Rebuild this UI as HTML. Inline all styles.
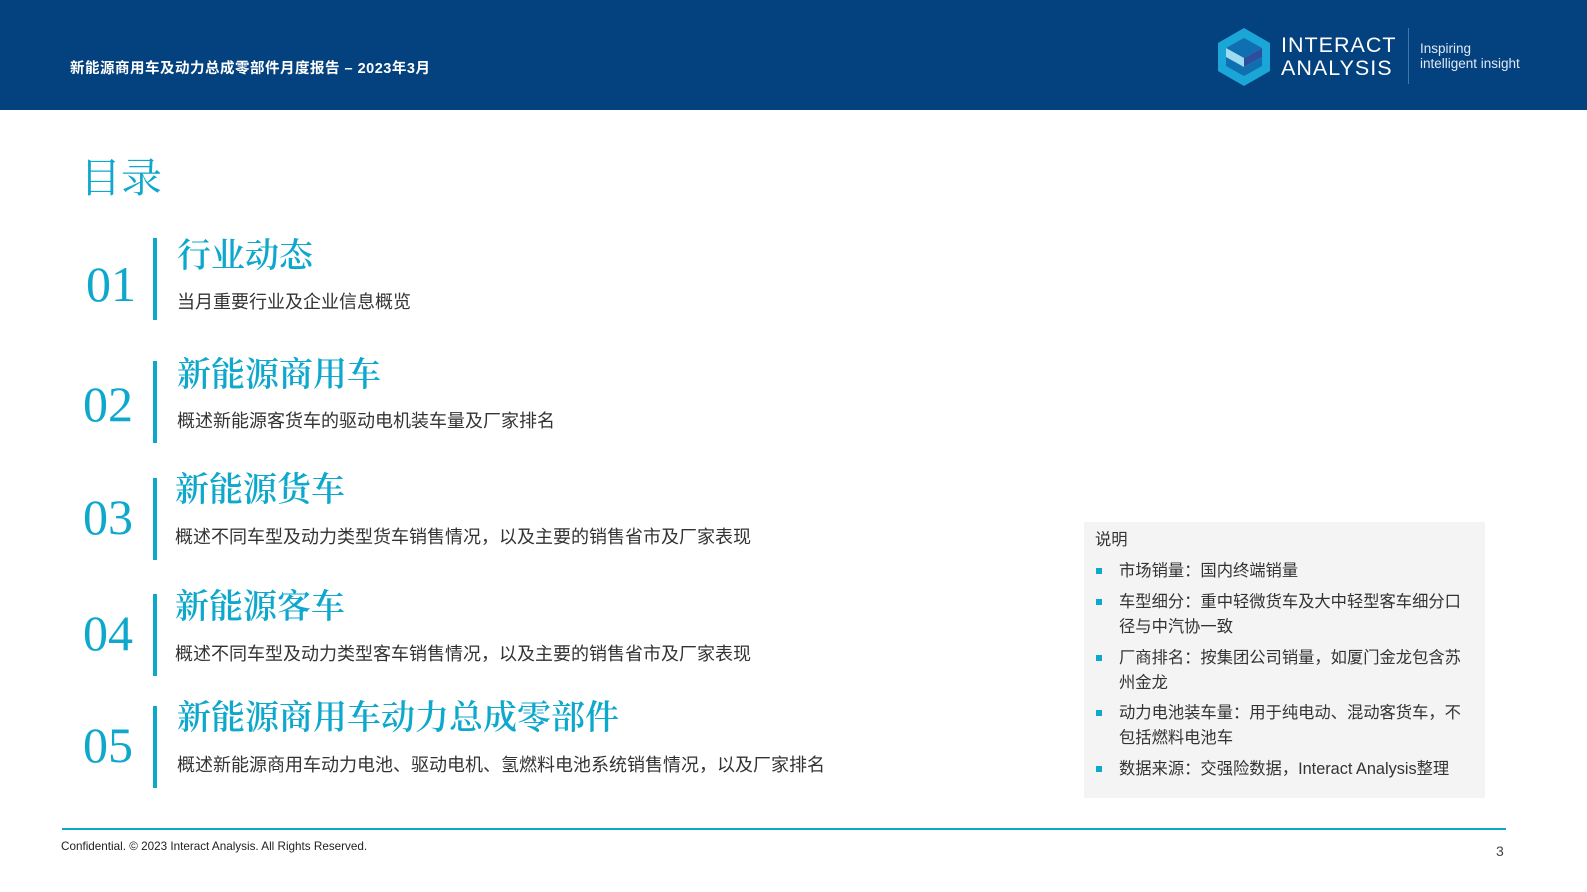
<!DOCTYPE html>
<html><head><meta charset="utf-8"><style>
*{margin:0;padding:0;box-sizing:border-box}
body{width:1587px;height:892px;background:#fff;position:relative;overflow:hidden;font-family:"Liberation Sans","Noto Sans CJK SC",sans-serif}
.a{position:absolute;white-space:nowrap}
.hdr{left:0;top:0;width:1587px;height:110px;background:#04417f}
.num{font-family:"Liberation Serif","Noto Serif CJK SC",serif;font-size:50px;color:#0ea8cc;line-height:1}
.bar{width:4px;height:82px;background:#0ea8cc}
.tt{font-family:"Liberation Serif","Noto Serif CJK SC",serif;font-size:34px;color:#0ea8cc;line-height:1;font-weight:600}
.st{font-size:18px;color:#333;line-height:1}
.box{left:1084px;top:522px;width:401px;height:276px;background:#f4f4f4}
.n{font-size:16.3px;color:#333;line-height:25px}
.sq{width:6px;height:6px;background:#0ea8cc}
</style></head><body>
<div class="a hdr"></div>
<div class="a" style="left:70px;top:57px;font-size:14.5px;font-weight:bold;color:#fff;letter-spacing:0.5px">新能源商用车及动力总成零部件月度报告 – 2023年3月</div>
<svg class="a" style="left:1218px;top:28px" width="52" height="58" viewBox="0 0 52 58">
<polygon points="26,0 52,15 52,43 26,58 0,43 0,15" fill="#1aa6d6"/>
<polygon points="26,10 44,20 44,38 26,48 8,38 8,20" fill="#0f6fb0"/>
<polygon points="8,20 26,30 44,20 44,29 26,39 8,29" fill="#9fdcf2"/>
<polygon points="26,30 44,20 44,29 26,39" fill="#2b4f9e"/>
</svg>
<div class="a" style="left:1281px;top:34px;font-size:21.5px;color:#fff;letter-spacing:1px;line-height:23px">INTERACT<br>ANALYSIS</div>
<div class="a" style="left:1408px;top:28px;width:1px;height:56px;background:#3f78b0"></div>
<div class="a" style="left:1420px;top:41px;font-size:13.5px;color:#dfe9f4;line-height:15px">Inspiring<br>intelligent insight</div>
<div class="a" style="left:80px;top:158px;font-family:'Liberation Serif','Noto Serif CJK SC',serif;font-size:41px;color:#0ea8cc;line-height:1">目录</div>

<div class="a num" style="left:86px;top:259px">01</div><div class="a bar" style="left:153px;top:238px"></div>
<div class="a tt" style="left:177px;top:240px">行业动态</div><div class="a st" style="left:177px;top:293px">当月重要行业及企业信息概览</div>

<div class="a num" style="left:83px;top:379px">02</div><div class="a bar" style="left:153px;top:361px"></div>
<div class="a tt" style="left:177px;top:359px">新能源商用车</div><div class="a st" style="left:177px;top:412px">概述新能源客货车的驱动电机装车量及厂家排名</div>

<div class="a num" style="left:83px;top:492px">03</div><div class="a bar" style="left:153px;top:478px"></div>
<div class="a tt" style="left:175px;top:474px">新能源货车</div><div class="a st" style="left:175px;top:528px">概述不同车型及动力类型货车销售情况，以及主要的销售省市及厂家表现</div>

<div class="a num" style="left:83px;top:608px">04</div><div class="a bar" style="left:153px;top:594px"></div>
<div class="a tt" style="left:175px;top:591px">新能源客车</div><div class="a st" style="left:175px;top:645px">概述不同车型及动力类型客车销售情况，以及主要的销售省市及厂家表现</div>

<div class="a num" style="left:83px;top:720px">05</div><div class="a bar" style="left:153px;top:706px"></div>
<div class="a tt" style="left:177px;top:702px">新能源商用车动力总成零部件</div><div class="a st" style="left:177px;top:756px">概述新能源商用车动力电池、驱动电机、氢燃料电池系统销售情况，以及厂家排名</div>

<div class="a box"></div>
<div class="a n" style="left:1095px;top:528px">说明</div>
<div class="a sq" style="left:1096px;top:568px"></div><div class="a n" style="left:1119px;top:559px">市场销量：国内终端销量</div>
<div class="a sq" style="left:1096px;top:599px"></div><div class="a n" style="left:1119px;top:590px">车型细分：重中轻微货车及大中轻型客车细分口<br>径与中汽协一致</div>
<div class="a sq" style="left:1096px;top:655px"></div><div class="a n" style="left:1119px;top:646px">厂商排名：按集团公司销量，如厦门金龙包含苏<br>州金龙</div>
<div class="a sq" style="left:1096px;top:710px"></div><div class="a n" style="left:1119px;top:701px">动力电池装车量：用于纯电动、混动客货车，不<br>包括燃料电池车</div>
<div class="a sq" style="left:1096px;top:766px"></div><div class="a n" style="left:1119px;top:757px">数据来源：交强险数据，Interact Analysis整理</div>

<div class="a" style="left:62px;top:828px;width:1444px;height:2px;background:#0ea8cc"></div>
<div class="a" style="left:61px;top:840px;font-size:11.7px;color:#222">Confidential. © 2023 Interact Analysis. All Rights Reserved.</div>
<div class="a" style="left:1496px;top:843px;font-size:14px;color:#444">3</div>
</body></html>
